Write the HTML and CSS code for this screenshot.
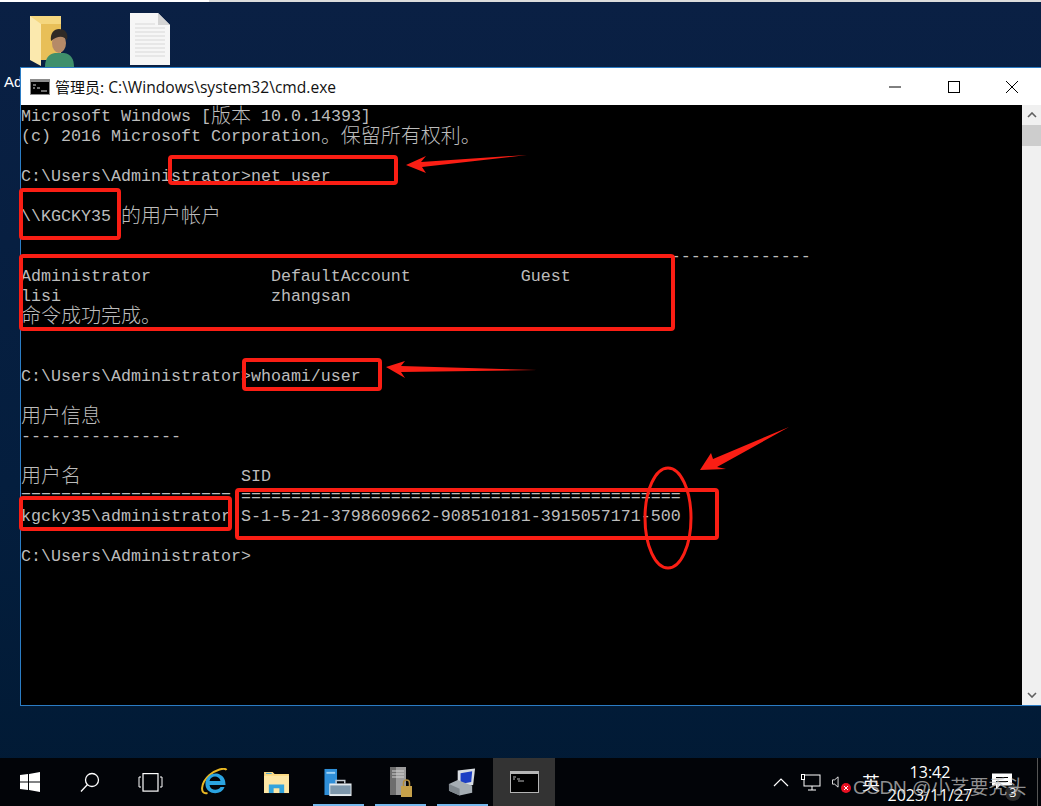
FILE: index.html
```html
<!DOCTYPE html>
<html lang="zh-CN">
<head>
    <meta charset="UTF-8">
    <title>cmd.exe</title>
    <link rel="stylesheet" href="styles.css">
</head>
<body>
    <div class="desktop">
        <div class="top-strip"></div>

        <!-- Desktop icons -->
        <svg class="desk-icon folder-user" viewBox="0 0 44 52">
            <path d="M0 1h31v44H0z" fill="#f5d77f"/>
            <path d="M0 1l11 8v42L0 45z" fill="#fbe9ae"/>
            <path d="M11 9h20v36H11z" fill="#e8bf58"/>
            <path d="M15 52c0-9 4-13 10-14h9c7 1 10 6 10 14z" fill="#3f8f6b"/>
            <ellipse cx="29" cy="28" rx="7" ry="10" fill="#b58a68"/>
            <path d="M21 26c-1-8 3-12 8-12s10 3 8 11c-3-4-9-5-16 1z" fill="#2f2a26"/>
        </svg>
        <svg class="desk-icon doc" viewBox="0 0 40 52">
            <path d="M0 0h28l12 12v40H0z" fill="#f6f6f6"/>
            <path d="M28 0l12 12H28z" fill="#d4d4d4"/>
            <path d="M5 11h20M5 15h30M5 19h30M5 23h30M5 27h30M5 31h30M5 35h30M5 39h30M5 43h30" stroke="#e2e2e2" stroke-width="1.500"/>
        </svg>
        <div class="desk-label">Ad</div>

        <!-- Console window -->
        <div class="window">
            <div class="titlebar">
                <svg class="cmd-icon" viewBox="0 0 20 16">
                    <rect width="20" height="16" fill="#8c8c8c"/>
                    <rect x="1" y="3" width="18" height="12" fill="#000"/>
                    <path d="M3 6h3M3 9h2M7 9h3M11 12h6" stroke="#ddd" stroke-width="1"/>
                </svg>
                <span class="title-text"><span class="title-cjk">管理员:</span> C:\Windows\system32\cmd.exe</span>
                <div class="win-buttons">
                    <svg class="win-btn" viewBox="0 0 12 12"><path d="M0 6h12" stroke="#000"/></svg>
                    <svg class="win-btn" viewBox="0 0 12 12"><rect x=".5" y=".5" width="11" height="11" fill="none" stroke="#000"/></svg>
                    <svg class="win-btn" viewBox="0 0 12 12"><path d="M0 0l12 12M12 0L0 12" stroke="#000"/></svg>
                </div>
            </div>
            <div class="client">
                <div class="console">
                    <div class="line">Microsoft Windows [<span class="cjk">版本</span> 10.0.14393]</div>
                    <div class="line">(c) 2016 Microsoft Corporation<span class="cjk">。保留所有权利。</span></div>
                    <div class="line"></div>
                    <div class="line">C:\Users\Administrator&gt;net user</div>
                    <div class="line"></div>
                    <div class="line">\\KGCKY35 <span class="cjk">的用户帐户</span></div>
                    <div class="line"></div>
                    <div class="line">-------------------------------------------------------------------------------</div>
                    <div class="line">Administrator            DefaultAccount           Guest</div>
                    <div class="line">lisi                     zhangsan</div>
                    <div class="line"><span class="cjk">命令成功完成。</span></div>
                    <div class="line"></div>
                    <div class="line"></div>
                    <div class="line">C:\Users\Administrator&gt;whoami/user</div>
                    <div class="line"></div>
                    <div class="line"><span class="cjk">用户信息</span></div>
                    <div class="line">----------------</div>
                    <div class="line"></div>
                    <div class="line"><span class="cjk">用户名</span>                SID</div>
                    <div class="line">===================== ============================================</div>
                    <div class="line">kgcky35\administrator S-1-5-21-3798609662-908510181-3915057171-500</div>
                    <div class="line"></div>
                    <div class="line">C:\Users\Administrator&gt;</div>
                </div>
                <div class="scrollbar">
                    <svg class="scroll-arrow" viewBox="0 0 10 6"><path d="M1 5l4-4 4 4" fill="none" stroke="#606060" stroke-width="1.600"/></svg>
                    <div class="scroll-thumb"></div>
                    <div class="scroll-track"></div>
                    <svg class="scroll-arrow" viewBox="0 0 10 6"><path d="M1 1l4 4 4-4" fill="none" stroke="#606060" stroke-width="1.600"/></svg>
                </div>
            </div>
        </div>

        <!-- Red annotations drawn over the screenshot -->
        <svg class="marks" viewBox="0 0 1041 806">
            <g fill="none" stroke="#fa1e14" stroke-width="4">
                <rect x="170" y="157" width="226" height="26" rx="2"/>
                <rect x="21" y="190" width="98" height="48" rx="2"/>
                <rect x="21" y="256" width="652" height="73" rx="2"/>
                <rect x="244" y="360" width="136" height="29" rx="2"/>
                <rect x="21" y="498" width="209" height="31" rx="2"/>
                <rect x="237" y="490" width="480" height="48" rx="2"/>
                <ellipse cx="668" cy="518" rx="23" ry="50" stroke-width="3"/>
            </g>
            <g fill="#fa1e14">
                <path d="M406 165l20-9-5 6 106-7-105 12 4 6z"/>
                <path d="M386 367l19-6-4 5 136 4-136 2 4 6z"/>
                <path d="M700 470l11-17 2 6 76-32-72 40 9 2z"/>
            </g>
        </svg>

        <!-- Taskbar -->
        <div class="taskbar">
            <div class="task-icons">
                <div class="task-item sys-item">
                    <svg class="ti-win" viewBox="0 0 20 20"><path d="M0 3l8-1v7.500H0zM9 2l11-2v9.500H9zM0 10.500h8V18l-8-1zM9 10.500h11V20L9 18z" fill="#fff"/></svg>
                </div>
                <div class="task-item sys-item">
                    <svg class="ti-win" viewBox="0 0 20 20"><circle cx="12" cy="8" r="6.500" fill="none" stroke="#fff" stroke-width="1.300"/><path d="M7.500 12.500L1 19.500" stroke="#fff" stroke-width="1.300"/></svg>
                </div>
                <div class="task-item sys-item">
                    <svg class="ti-view" viewBox="0 0 25 19"><rect x="5" y=".6" width="15" height="17.500" fill="none" stroke="#fff" stroke-width="1.200"/><path d="M3 4H1v10h2M22 4h2v10h-2" fill="none" stroke="#fff"/></svg>
                </div>
                <div class="task-item ie-item">
                    <svg class="ti-ie" viewBox="0 0 28 28">
                        <path d="M7 25C-1 27 0 15 9 7 15 2 24-1 26 2" fill="none" stroke="#e9b824" stroke-width="2"/>
                        <path d="M25 17h-16c1 6 9 6 11 2h4c-3 9-18 8-19-2C4 8 14 3 20 7c4 2 5 6 5 10zM9 13h11c-1-6-10-6-11 0z" fill="#2ba4e0"/>
                    </svg>
                </div>
                <div class="task-item">
                    <svg class="ti-folder" viewBox="0 0 28 24">
                        <path d="M1 1h9l2 2h15v20H1z" fill="#fcd980"/>
                        <path d="M1 5h26v18H1z" fill="#fde7a6"/>
                        <path d="M6 23v-9h16v9h-5v-5h-6v5z" fill="#33a4dc"/>
                        <path d="M3 2h6v1H3z" fill="#3aa0d8"/>
                    </svg>
                </div>
                <div class="task-item with-bar">
                    <svg class="ti-server" viewBox="0 0 30 30">
                        <path d="M1 1h13v27H1z" fill="#2f8fd8"/>
                        <path d="M3 4h9v2H3z" fill="#9fd2f4"/>
                        <path d="M6 16h23v13H6z" fill="#e4eaee"/>
                        <path d="M7 18h21v9H7z" fill="#7d97ab"/>
                        <path d="M13 16v-3h9v3" fill="none" stroke="#c5ccd2" stroke-width="1.500"/>
                    </svg>
                </div>
                <div class="task-item with-bar">
                    <svg class="ti-lock" viewBox="0 0 23 30">
                        <path d="M1 0h16v28H1z" fill="#9c9c9c"/>
                        <path d="M1 0h6v28H1z" fill="#6d6d6d"/>
                        <path d="M3 4h12M3 7h12M3 10h12" stroke="#d4d4d4"/>
                        <path d="M12 19h11v11H12z" fill="#c6a14a"/>
                        <path d="M14.500 19v-3a3 3 0 0 1 6 0v3" fill="none" stroke="#b48d3a" stroke-width="1.500"/>
                    </svg>
                </div>
                <div class="task-item with-bar">
                    <svg class="ti-tool" viewBox="0 0 30 30">
                        <path d="M10 3l18-2-2 17-16 3z" fill="#d8dde2"/>
                        <path d="M13 6l12-2-1 11-11 2z" fill="#1d3fc4"/>
                        <path d="M1 17l9-4 15 6v7l-13 3-11-5z" fill="#a5adb3"/>
                        <path d="M1 17l11 5v7l-11-5z" fill="#7e868c"/>
                    </svg>
                </div>
                <div class="task-item active-app">
                    <svg class="ti-cmd" viewBox="0 0 29 22">
                        <rect width="29" height="22" fill="#b5b5b5"/>
                        <rect x="1" y="3" width="27" height="18" fill="#000"/>
                        <path d="M3 6h3M3 8h2M7 8h3M8 10h6" stroke="#bbb"/>
                    </svg>
                </div>
            </div>
            <div class="tray">
                <svg class="tray-chevron" viewBox="0 0 16 9"><path d="M1 8l7-7 7 7" fill="none" stroke="#fff" stroke-width="1.200"/></svg>
                <svg class="tray-net" viewBox="0 0 20 17"><rect x="3" y="1" width="16" height="11" fill="none" stroke="#fff"/><path d="M11 12v4M7 16h8" stroke="#fff"/><rect x=".5" y=".5" width="3" height="5" fill="#000" stroke="#fff"/></svg>
                <div class="tray-sound">
                    <svg class="tray-speaker" viewBox="0 0 8 14"><path d="M.5 4.500h2.500L7 1v12L3 9.500H.5z" fill="none" stroke="#fff"/></svg>
                    <svg class="tray-x" viewBox="0 0 10 10"><circle cx="5" cy="5" r="5" fill="#e81123"/><path d="M3 3l4 4M7 3L3 7" stroke="#fff"/></svg>
                </div>
                <span class="tray-lang">英</span>
                <div class="clock">
                    <span>13:42</span>
                    <span>2023/11/27</span>
                </div>
                <div class="notify">
                    <svg class="notify-icon" viewBox="0 0 20 16"><path d="M0 0h20v12H8l-4 4v-4H0z" fill="#fff"/><path d="M4 4h12M4 8h12" stroke="#000"/></svg>
                    <span class="notify-count">3</span>
                </div>
            </div>
        </div>

        <div class="watermark">CSDN @小艺要秃头</div>
    </div>
</body>
</html>
```

FILE: styles.css
```css
html, body {
    margin: 0;
    padding: 0;
}
.desktop {
    position: relative;
    width: 1041px;
    height: 806px;
    overflow: hidden;
    background: linear-gradient(180deg, #0a2044 0%, #041e3e 60%, #011a34 100%);
}
.top-strip {
    height: 2px;
    background: linear-gradient(90deg, #fff 0 209px, #dcdcdc 209px);
}
.desk-icon {
    position: absolute;
}
.folder-user {
    left: 30px;
    top: 15px;
    width: 44px;
    height: 52px;
}
.doc {
    left: 130px;
    top: 13px;
    width: 40px;
    height: 52px;
}
.desk-label {
    position: absolute;
    left: 4px;
    top: 73px;
    color: #fff;
    font: 15px "Liberation Sans", sans-serif;
}

/* Console window */
.window {
    position: absolute;
    left: 20px;
    top: 67px;
    width: 1021px;
    height: 639px;
    display: flex;
    flex-direction: column;
    border-top: 1px solid #2b7cc4;
    border-left: 1px solid #2b7cc4;
    border-bottom: 1px solid #2b7cc4;
    box-sizing: border-box;
}
.titlebar {
    height: 37px;
    flex: none;
    background: #fff;
    display: flex;
    align-items: center;
    padding-left: 9px;
}
.cmd-icon {
    width: 20px;
    height: 16px;
}
.title-text {
    margin-left: 5px;
    font: 15.600px "Open Sans", "Noto Sans CJK SC", sans-serif;
    color: #111;
}
.title-cjk {
    font-family: "Noto Sans CJK SC", sans-serif;
    font-size: 15px;
}
.win-buttons {
    margin-left: auto;
    display: flex;
    gap: 46.500px;
    padding-right: 23px;
}
.win-btn {
    width: 12px;
    height: 12px;
}
.client {
    flex: 1;
    display: flex;
    min-height: 0;
}
.console {
    flex: 1;
    background: #000;
    color: #bcbcbc;
    padding-top: 2px;
    font: 16.670px/20px "Liberation Mono", monospace;
}
.line {
    height: 20px;
    white-space: pre;
}
.cjk {
    font-family: "Noto Sans CJK SC", sans-serif;
    font-size: 20px;
    font-weight: 300;
    line-height: 0;
    vertical-align: -2px;
}
.scrollbar {
    width: 19px;
    flex: none;
    background: #f0f0f0;
    display: flex;
    flex-direction: column;
    align-items: center;
}
.scroll-arrow {
    width: 10px;
    height: 6px;
    flex: none;
    margin: 7px 0;
}
.scroll-thumb {
    width: 100%;
    height: 21px;
    background: #cdcdcd;
}
.scroll-track {
    flex: 1;
}

/* Annotations */
.marks {
    position: absolute;
    left: 0;
    top: 0;
    width: 1041px;
    height: 806px;
    pointer-events: none;
}

/* Taskbar */
.taskbar {
    position: absolute;
    left: 0;
    right: 0;
    bottom: 0;
    height: 48px;
    background: #020408;
    display: flex;
    justify-content: space-between;
}
.task-icons {
    display: flex;
}
.task-item {
    width: 62px;
    height: 48px;
    display: flex;
    align-items: center;
    justify-content: center;
    position: relative;
}
.sys-item {
    width: 60px;
}
.ie-item {
    margin-left: 3px;
}
.with-bar::after {
    content: "";
    position: absolute;
    left: 6px;
    right: 5px;
    bottom: 0;
    height: 2px;
    background: #76b9ed;
}
.active-app {
    background: #333;
}
.ti-win { width: 20px; height: 20px; }
.ti-view { width: 25px; height: 19px; }
.ti-ie { width: 29px; height: 28px; }
.ti-folder { width: 27px; height: 23px; }
.ti-server { width: 30px; height: 29px; }
.ti-lock { width: 23px; height: 30px; }
.ti-tool { width: 29px; height: 30px; }
.ti-cmd { width: 29px; height: 22px; }
.tray {
    display: flex;
    align-items: center;
    color: #fff;
    font: 16px "Open Sans", sans-serif;
}
.tray-chevron {
    width: 16px;
    height: 9px;
    margin-right: 12px;
}
.tray-net {
    width: 20px;
    height: 17px;
    margin-right: 11px;
}
.tray-sound {
    position: relative;
    width: 20px;
    height: 24px;
    margin-right: 10px;
    display: flex;
    align-items: center;
}
.tray-speaker {
    width: 7px;
    height: 12px;
}
.tray-x {
    position: absolute;
    left: 9px;
    top: 13px;
    width: 10px;
    height: 10px;
}
.tray-lang {
    font-family: "Noto Sans CJK SC", sans-serif;
    font-size: 18px;
    line-height: 18px;
}
.clock {
    width: 100px;
    display: flex;
    flex-direction: column;
    align-items: center;
    line-height: 23px;
    padding-top: 3px;
}
.notify {
    position: relative;
    width: 58px;
    height: 48px;
    margin-right: 3px;
    border-right: 1px solid #555;
    box-sizing: border-box;
}
.notify-icon {
    position: absolute;
    left: 12px;
    top: 15px;
    width: 20px;
    height: 17px;
}
.notify-count {
    position: absolute;
    left: 25px;
    top: 27px;
    width: 16px;
    height: 16px;
    border-radius: 50%;
    background: #2b2b2b;
    color: #fff;
    font-size: 12px;
    line-height: 16px;
    text-align: center;
}
.watermark {
    position: absolute;
    left: 853px;
    top: 777px;
    color: rgba(190, 190, 190, 0.75);
    font: 19px/22px "Liberation Sans", "Noto Sans CJK SC", sans-serif;
    white-space: nowrap;
}
```
